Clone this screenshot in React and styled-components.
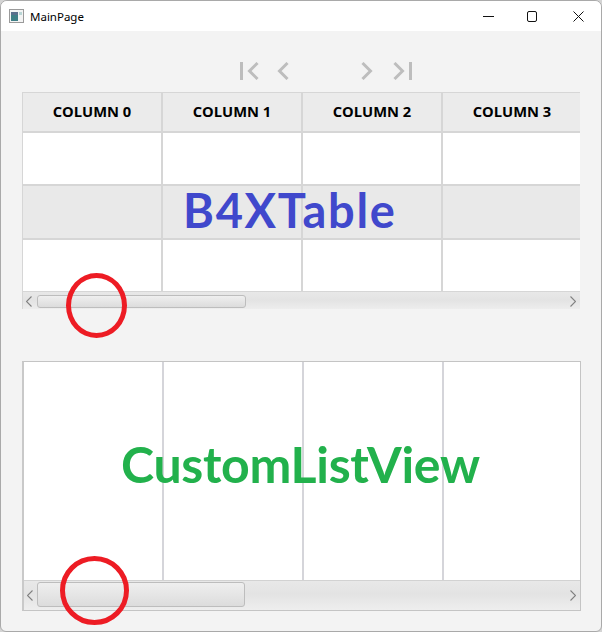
import React from "react";
import styled, { createGlobalStyle } from "styled-components";

const Global = createGlobalStyle`
  html, body {
    margin: 0;
    padding: 0;
    background: #d4d4d4;
  }
  * { box-sizing: border-box; }
`;

const Window = styled.div`
  position: relative;
  width: 602px;
  height: 632px;
  overflow: hidden;
  display: flex;
  flex-direction: column;
  background: #f3f3f3;
  border: 1px solid #a9a9a9;
  border-radius: 7px 7px 6px 6px;
  font-family: "Open Sans", "Noto Sans", sans-serif;
`;

const TitleBar = styled.div`
  height: 30px;
  flex: none;
  display: flex;
  align-items: center;
  padding: 0 17px 0 8px;
  background: #fff;
  font-size: 11.5px;
  color: #000;
`;

const TitleText = styled.span`
  margin-left: 6px;
  flex: 1;
  font-family: "Noto Sans", sans-serif;
`;

const Controls = styled.div`
  display: flex;
  align-items: center;
  gap: 33px;

  svg:last-child {
    margin-left: 3px;
  }
`;

const Content = styled.div`
  flex: 1;
  display: flex;
  flex-direction: column;
  padding: 30px 0 0 21px;
`;

const NavBar = styled.div`
  width: 558px;
  height: 31px;
  display: flex;
  align-items: flex-start;
  padding: 1px 0 0 218px;
  color: #bdbdbd;
`;

const Table = styled.div`
  width: 558px;
  height: 217px;
  overflow: hidden;
  display: flex;
  flex-direction: column;
  border-top: 1px solid #d6d6d6;
  border-left: 1px solid #d6d6d6;
`;

const Row = styled.div`
  display: flex;
  flex: none;
  height: ${(p) => p.$h}px;
  background: ${(p) => p.$bg};
  border-bottom: ${(p) => p.$line || 2}px solid #d6d6d6;
`;

const Cell = styled.div`
  flex: none;
  width: 140px;
  padding-bottom: 2px;
  display: flex;
  align-items: center;
  justify-content: center;
  border-right: 2px solid #d6d6d6;
  font-family: "Open Sans", sans-serif;
  font-weight: 700;
  font-size: 14.7px;
  color: #000;
`;

const Track = styled.div`
  flex: none;
  position: relative;
  display: flex;
  align-items: center;
  justify-content: space-between;
  height: ${(p) => p.$h}px;
  padding: 0 4px 0 3px;
  background: linear-gradient(#e8e8e8, #e3e3e3 45%, #eeeeee);
  border-top: ${(p) => p.$line || 0}px solid #d2d2d2;
  color: #808080;
`;

const Thumb = styled.div`
  position: absolute;
  left: ${(p) => p.$left}px;
  top: ${(p) => p.$top}px;
  width: ${(p) => p.$w}px;
  height: ${(p) => p.$h}px;
  background: linear-gradient(#efefef, #dcdcdc);
  border: 1px solid #bdbdbd;
  border-radius: 3px;
`;

const ListPanel = styled.div`
  width: 559px;
  height: 250px;
  margin-top: 52px;
  display: flex;
  flex-direction: column;
  border: 1px solid #c4c4c4;
  border-left: 2px solid #c9c9c9;
  background: #fff;
`;

const ListColumns = styled.div`
  flex: 1;
  display: flex;
  overflow: hidden;
`;

const ListColumn = styled.div`
  flex: none;
  width: 140px;
  border-right: 2px solid #d5d5da;
`;

const Label = styled.div`
  position: absolute;
  left: ${(p) => p.$left}px;
  top: ${(p) => p.$top}px;
  font-family: "Lato", sans-serif;
  font-weight: 700;
  font-size: ${(p) => p.$size}px;
  letter-spacing: ${(p) => p.$spacing}px;
  line-height: 1;
  white-space: nowrap;
  color: ${(p) => p.$color};
`;

const Circle = styled.div`
  position: absolute;
  left: ${(p) => p.$left}px;
  top: ${(p) => p.$top}px;
  width: ${(p) => p.$w}px;
  height: ${(p) => p.$h}px;
  border: ${(p) => p.$stroke}px solid #ed1c24;
  border-radius: 50%;
`;

const NavIcon = ({ d, w, x }) => (
  <svg
    width={w}
    height="18"
    viewBox={`0 0 ${w} 18`}
    fill="none"
    stroke="currentColor"
    strokeWidth="3"
    style={{ marginLeft: x, display: "block" }}
  >
    <path d={d} />
  </svg>
);

const Chevron = ({ right }) => (
  <svg width="6" height="11" viewBox="0 0 6 11" fill="none" stroke="currentColor" strokeWidth="1.1">
    <path d={right ? "M0.5 0.5 L5.5 5.5 L0.5 10.5" : "M5.5 0.5 L0.5 5.5 L5.5 10.5"} />
  </svg>
);

const columns = ["COLUMN 0", "COLUMN 1", "COLUMN 2", "COLUMN 3"];

const App = () => {
  return (
    <Window>
      <Global />
      <TitleBar>
        <svg width="15" height="14" viewBox="0 0 15 14">
          <rect x="0.5" y="0.5" width="14" height="13" fill="#f4f4f4" stroke="#9a9a9a" />
          <rect x="2" y="3" width="7" height="9" fill="#3f7f86" />
          <rect x="2" y="3" width="7" height="3" fill="#5a6f8c" />
          <rect x="10" y="3" width="3" height="3" fill="#b9d6d6" />
        </svg>
        <TitleText>MainPage</TitleText>
        <Controls>
          <svg width="11" height="11" viewBox="0 0 11 11" stroke="#111" fill="none">
            <path d="M0 5.5 H11" />
          </svg>
          <svg width="10" height="11" viewBox="0 0 10 11" stroke="#111" fill="none">
            <rect x="0.5" y="0.5" width="9" height="10" rx="1.5" />
          </svg>
          <svg width="11" height="11" viewBox="0 0 11 11" stroke="#111" fill="none">
            <path d="M0.5 0.5 L10.5 10.5 M10.5 0.5 L0.5 10.5" />
          </svg>
        </Controls>
      </TitleBar>
      <Content>
        <NavBar>
          <NavIcon w={20} x={0} d="M1.5 0 V18 M17.5 1 L9.5 9 L17.5 17" />
          <NavIcon w={12} x={17} d="M10.5 1 L2.5 9 L10.5 17" />
          <NavIcon w={12} x={72} d="M1.5 1 L9.5 9 L1.5 17" />
          <NavIcon w={20} x={19} d="M2.5 1 L10.5 9 L2.5 17 M18.5 0 V18" />
        </NavBar>
        <Table>
          <Row $h={40} $bg="#ebebeb">
            {columns.map((c) => (
              <Cell key={c}>{c}</Cell>
            ))}
          </Row>
          {[
            [53, "#fff", 2],
            [54, "#e9e9e9", 2],
            [52, "#fff", 1],
          ].map(([h, bg, line], i) => (
            <Row key={i} $h={h} $bg={bg} $line={line}>
              {columns.map((c) => (
                <Cell key={c} />
              ))}
            </Row>
          ))}
          <Track $h={18}>
            <Chevron />
            <Chevron right />
            <Thumb $left={14} $top={3} $w={209} $h={13} />
          </Track>
        </Table>
        <ListPanel>
          <ListColumns>
            {columns.map((c) => (
              <ListColumn key={c} />
            ))}
          </ListColumns>
          <Track $h={30} $line={1}>
            <Chevron />
            <Chevron right />
            <Thumb $left={13} $top={1} $w={208} $h={25} />
          </Track>
        </ListPanel>
      </Content>
      <Label $left={182} $top={186} $size={47} $spacing={1.7} $color="#4048cc">B4XTable</Label>
      <Label $left={120} $top={438} $size={50} $spacing={-0.3} $color="#22b14c">CustomListView</Label>
      <Circle $left={65} $top={272} $w={61} $h={65} $stroke={5} />
      <Circle $left={59} $top={555} $w={69} $h={69} $stroke={5} />
    </Window>
  );
};

export default App;
